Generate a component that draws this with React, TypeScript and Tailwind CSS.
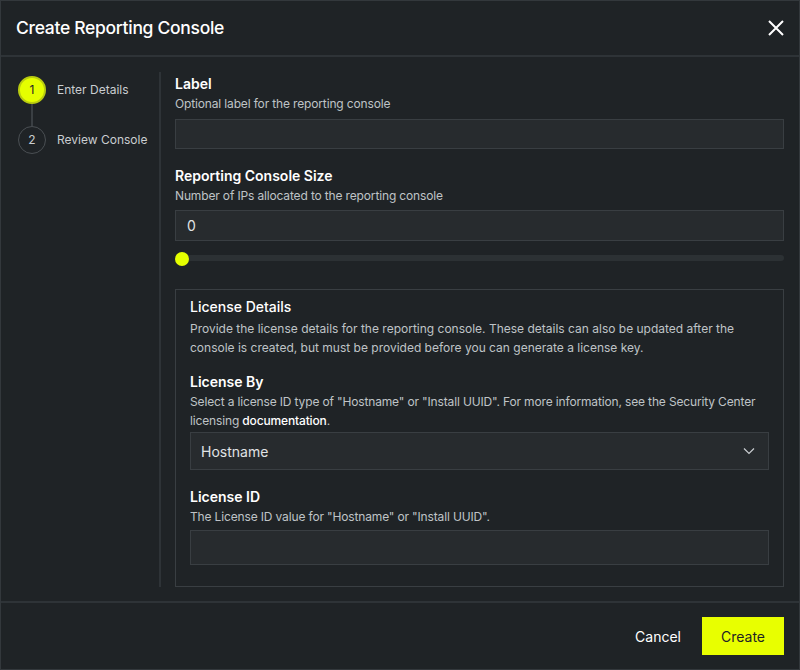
import React from "react";

const font = { fontFamily: "Inter, 'Liberation Sans', sans-serif" };

export default function App() {
  return (
    <div style={font} className="w-[800px] h-[670px] bg-[#1f2326] border border-[#33383c] flex flex-col text-[#e8eaeb] box-border">
      {/* Header */}
      <div className="h-[56px] shrink-0 flex items-center justify-between pl-[15px] pr-[14px] border-b-2 border-[#2e3337]">
        <div className="text-[17.5px] font-medium tracking-[-0.3px] text-white">Create Reporting Console</div>
        <svg width="18" height="18" viewBox="0 0 18 18" className="text-white">
          <path d="M2 2 L16 16 M16 2 L2 16" stroke="currentColor" strokeWidth="2" />
        </svg>
      </div>
      {/* Body */}
      <div className="flex-1 flex pt-[15px] pb-[14px] min-h-0">
        {/* Stepper */}
        <div className="w-[160px] shrink-0 pl-[17px] pt-[4px] border-r-2 border-[#2e3337]">
          <div className="flex items-center gap-[11px]">
            <div className="w-[28px] h-[28px] rounded-full bg-[#e5ff00] border-2 border-[#b9cc10] flex items-center justify-center text-[12px] text-[#1f2326]">1</div>
            <div className="text-[12px] text-[#c9cdd0] whitespace-nowrap">Enter Details</div>
          </div>
          <div className="ml-[13px] w-[2px] h-[22px] bg-[#3a3f43]" />
          <div className="flex items-center gap-[11px]">
            <div className="w-[28px] h-[28px] rounded-full border border-[#4a4f53] flex items-center justify-center text-[12px] text-[#c9cdd0]">2</div>
            <div className="text-[12px] text-[#c9cdd0] whitespace-nowrap">Review Console</div>
          </div>
        </div>
        {/* Form */}
        <div className="flex-1 min-w-0 pl-[14px] pr-[15px] flex flex-col">
          <div className="text-[14px] font-semibold text-white leading-[20px] pt-[2px]">Label</div>
          <div className="text-[12px] text-[#bfc3c6] leading-[20px] tracking-[-0.15px]">Optional label for the reporting console</div>
          <div className="mt-[5px] h-[34px] bg-[#272b2e] border border-[#393e42]" />

          <div className="mt-[17px] text-[14px] font-semibold text-white leading-[20px]">Reporting Console Size</div>
          <div className="text-[12px] text-[#bfc3c6] leading-[20px] tracking-[-0.15px]">Number of IPs allocated to the reporting console</div>
          <div className="mt-[4px] h-[35px] bg-[#272b2e] border border-[#393e42] flex items-center px-[11px] text-[14px] text-[#e0e3e5]">0</div>
          <div className="relative mt-[11px] h-[14px] flex items-center">
            <div className="w-full h-[6px] rounded-full bg-[#2c3134]" />
            <div className="absolute left-0 top-0 w-[14px] h-[14px] rounded-full bg-[#e5ff00]" />
          </div>

          <div className="mt-[25px] border border-[#393e42] px-[14px] pt-[7px] pb-[21px] flex-1">
            <div className="text-[14px] font-medium text-white leading-[20px]">License Details</div>
            <div className="mt-[2px] text-[12px] text-[#bfc3c6] leading-[19px]">
              Provide the license details for the reporting console. These details can also be updated after the console is created, but must be provided before you can generate a license key.
            </div>
            <div className="mt-[15px] text-[14px] font-semibold text-white leading-[20px]">License By</div>
            <div className="text-[12px] text-[#bfc3c6] leading-[19px] tracking-[-0.15px]">
              Select a license ID type of "Hostname" or "Install UUID". For more information, see the Security Center licensing <span className="text-white font-medium">documentation</span>.
            </div>
            <div className="mt-[2px] h-[38px] bg-[#272b2e] border border-[#393e42] flex items-center justify-between pl-[10px] pr-[13px]">
              <span className="text-[14px] text-[#e0e3e5]">Hostname</span>
              <svg width="12" height="8" viewBox="0 0 12 8">
                <path d="M1 1.5 L6 6.5 L11 1.5" stroke="#c9cdd0" strokeWidth="1.2" fill="none" />
              </svg>
            </div>
            <div className="mt-[17px] text-[14px] font-semibold text-white leading-[20px]">License ID</div>
            <div className="text-[12px] text-[#bfc3c6] leading-[20px] tracking-[-0.15px]">The License ID value for "Hostname" or "Install UUID".</div>
            <div className="mt-[3px] h-[35px] bg-[#272b2e] border border-[#393e42]" />
          </div>
        </div>
      </div>
      {/* Footer */}
      <div className="h-[68px] shrink-0 border-t-2 border-[#2e3337] flex items-center justify-end gap-[21px] pr-[15px]">
        <button className="text-[14px] text-white">Cancel</button>
        <button className="h-[38px] w-[82px] bg-[#e8ff00] text-[#1f2326] text-[14px]">Create</button>
      </div>
    </div>
  );
}
